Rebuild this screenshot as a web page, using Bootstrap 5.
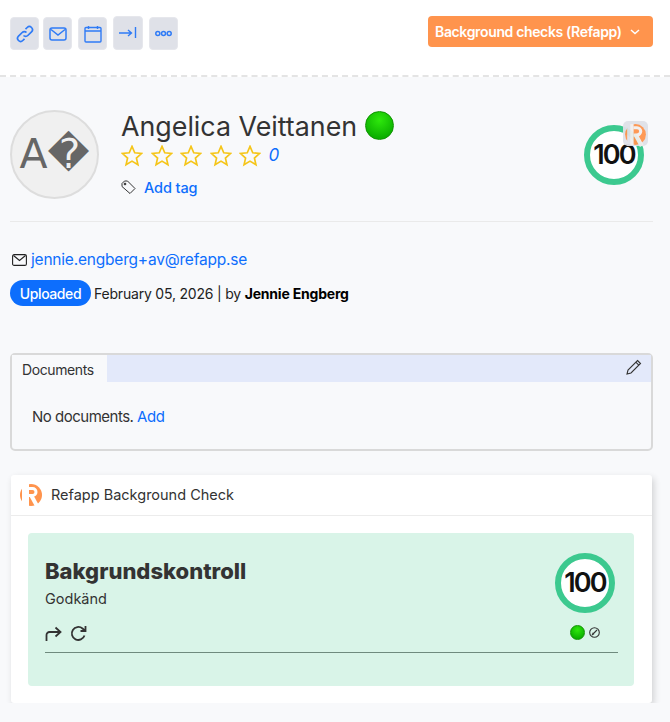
<!DOCTYPE html>
<html lang="en">
<head>
    <meta charset="UTF-8">
    <meta name="viewport" content="width=device-width, initial-scale=1.0">
    <title>Candidate</title>
    <link href="https://cdn.jsdelivr.net/npm/bootstrap@5.3.0/dist/css/bootstrap.min.css" rel="stylesheet">
    <style>
        body { background: #f8f9fb; font-family: Inter, "Liberation Sans", sans-serif; color: #333; overflow: hidden; }
        a { text-decoration: none; color: #0d6efd; }

        /* Top toolbar */
        .top-bar { background: #fff; height: 77px; border-bottom: 2px dashed #e4e4e4; padding: 17px 17px 0 10px; }
        .tool-btn { width: 29px; height: 33px; background: #dfe1e8; border: 1px solid #e6e7ec; border-radius: 4px; padding: 0; display: flex; align-items: center; justify-content: center; }
        .tool-group { gap: 4px; }
        .tool-gap { margin-left: 2px; }
        .tool-wide { width: 30px; height: 34px; margin-top: -1px; }
        .check-btn { background: #ff944d; color: #fff; border: 0; border-radius: 4px; width: 225px; height: 31px; margin-top: -1px; font-size: 14px; font-weight: 600; letter-spacing: -.35px; padding: 0 0 0 7px; display: flex; align-items: center; }
        .check-btn svg { margin-left: 8px; }

        /* Profile head */
        .profile-head { padding: 33px 26px 0 10px; height: 144px; }
        .avatar-round { width: 89px; height: 89px; border-radius: 50%; background: #f0f0f0; border: 2px solid #ddd; color: #666; font-size: 41px; line-height: 1; font-family: "DejaVu Sans", sans-serif; display: flex; align-items: center; justify-content: center; }
        .person-block { margin-left: 22px; }
        .person-name { font-size: 26.8px; font-weight: 400; line-height: 33px; margin: 0; color: #333; }
        .status-dot { display: inline-block; border-radius: 50%; border: 1px solid #0e9400; background: radial-gradient(circle at 50% 30%, #2ee80c, #0cb000 75%); }
        .status-dot-lg { width: 29px; height: 29px; margin-top: -3px; }
        .status-dot-sm { width: 15px; height: 15px; }
        .star-row { height: 25px; }
        .star-row svg { margin-right: 7.5px; }
        .star-count { font-style: italic; font-size: 17px; }
        .tag-row { margin-top: 9px; font-size: 14.5px; letter-spacing: -.1px; }
        .score-wrap { position: relative; width: 60px; height: 60px; margin-top: 15px; }
        .score-ring { width: 60px; height: 60px; border-radius: 50%; background: #fff; border: 6px solid #3cc98f; color: #111; font-size: 27px; font-weight: 600; letter-spacing: -1.800px; display: flex; align-items: center; justify-content: center; }
        .score-logo { position: absolute; top: -4px; right: -4px; width: 25px; height: 25px; background: #dfe1e8; border-radius: 5px; opacity: .95; }

        .soft-rule { margin: 0 17px 0 10px; border-top: 1px solid #eaeaea; }

        .contact-row { margin: 27px 0 0 12px; font-size: 15.5px; line-height: 22px; letter-spacing: -.2px; }
        .status-row { margin: 9px 0 0 10px; font-size: 14px; color: #222; letter-spacing: -.2px; }
        .status-pill { background: #0d6efd; color: #fff; border-radius: 13px; width: 81px; height: 26px; font-size: 14px; font-weight: 500; letter-spacing: -.4px; display: flex; align-items: center; justify-content: center; margin-right: 3px; }

        /* Documents box */
        .docs-box { margin: 47px 17px 0 10px; height: 98px; border: 2px solid #d9d9d9; border-radius: 5px; }
        .docs-tabs { height: 27px; background: #e3e9fa; }
        .docs-tab { width: 95px; height: 27px; background: #f8f9fb; font-size: 14px; letter-spacing: -.4px; padding-left: 10px; line-height: 29px; }
        .docs-edit { margin-right: 9px; }
        .docs-body { padding: 24px 0 0 20px; font-size: 15px; letter-spacing: -.5px; line-height: 22px; }

        /* Background check card */
        .check-card { margin: 24px 18px 0 11px; height: 228px; background: #fff; border-radius: 3px; border: 0; box-shadow: 2px 3px 7px rgba(0,0,0,.16); }
        .check-head { height: 41px; border-bottom: 1px solid #ececec; padding-left: 8px; font-size: 14.5px; }
        .check-head svg { margin-right: 8px; }
        .check-body { padding: 17px 18px 0 17px; }
        .result-box { height: 153px; background: #d9f4e8; border-radius: 4px; padding: 20px 16px 0 17px; }
        .result-title { font-size: 22px; font-weight: 800; line-height: 36px; margin: 0; color: #333; }
        .result-sub { font-size: 14.5px; line-height: 20px; }
        .result-tools { margin-top: 16px; gap: 8px; }
        .result-line { border-top: 1px solid #6f8a7e; margin-top: 10px; }
        .result-score { margin-right: 3px; }
        .result-marks { gap: 4px; margin: 12px 15px 0 0; }
    </style>
</head>
<body>

    <!-- Toolbar -->
    <div class="top-bar d-flex justify-content-between align-items-start">
        <div class="d-flex tool-group">
            <button class="tool-btn" type="button">
                <svg width="18" height="18" viewBox="0 0 18 18" fill="none" stroke="#2f7bf6" stroke-width="1.700"><path d="M7.500 10.500a3 3 0 0 0 4.300 0l3.700-3.700a3 3 0 0 0-4.300-4.300L9.500 4.200"/><path d="M10.500 7.500a3 3 0 0 0-4.300 0l-3.700 3.700a3 3 0 0 0 4.300 4.300l1.700-1.700"/></svg>
            </button>
            <button class="tool-btn" type="button">
                <svg width="18" height="14" viewBox="0 0 18 14" fill="none" stroke="#2f7bf6" stroke-width="1.500"><rect x="1" y="1" width="16" height="12" rx="2"/><path d="M2 2.500l7 5.500 7-5.500"/></svg>
            </button>
            <button class="tool-btn tool-gap" type="button">
                <svg width="18" height="18" viewBox="0 0 18 18" fill="none" stroke="#2f7bf6" stroke-width="1.400"><rect x="1" y="2.500" width="16" height="14.500" rx="1"/><path d="M1 6h16M4.500 1v3M13.500 1v3"/></svg>
            </button>
            <button class="tool-btn tool-wide tool-gap" type="button">
                <svg width="18" height="14" viewBox="0 0 18 14" fill="none" stroke="#2f7bf6" stroke-width="1.400"><path d="M0 7h12M9 4l3.500 3L9 10M16.500 1v11"/></svg>
            </button>
            <button class="tool-btn tool-gap" type="button">
                <svg width="17" height="7" viewBox="0 0 17 7" fill="none" stroke="#2f7bf6" stroke-width="1.500"><circle cx="2.800" cy="3.500" r="2"/><circle cx="8.500" cy="3.500" r="2"/><circle cx="14.200" cy="3.500" r="2"/></svg>
            </button>
        </div>
        <button class="check-btn" type="button">Background checks (Refapp)
            <svg width="10" height="6" viewBox="0 0 10 6" fill="none" stroke="#fff" stroke-width="1.500"><path d="M1 1l4 3.500L9 1"/></svg>
        </button>
    </div>

    <!-- Profile head -->
    <div class="profile-head d-flex justify-content-between align-items-start">
        <div class="d-flex">
            <div class="avatar-round">A&#xFFFD;</div>
            <div class="person-block">
                <h1 class="person-name d-flex align-items-center gap-2">Angelica Veittanen <span class="status-dot status-dot-lg"></span></h1>
                <div class="star-row d-flex align-items-center" id="stars"></div>
                <div class="tag-row d-flex align-items-center">
                    <svg width="15" height="15" viewBox="0 0 15 15" fill="none" stroke="#333" stroke-width="1"><path d="M1 3.500L3.500 1h3l7.500 7.500-5 5L1 6.500z"/><circle cx="4" cy="4" r=".9" fill="#333"/></svg>
                    <a href="#" class="ms-2 fw-medium">Add tag</a>
                </div>
            </div>
        </div>
        <div class="score-wrap">
            <div class="score-ring">100</div>
            <div class="score-logo">
                <svg width="25" height="25" viewBox="0 0 24 22"><circle cx="12" cy="11" r="10" fill="#ff944d"/><path d="M4 0H10V22H4z" fill="#dfe1e8"/><path d="M7 1h3v20H7z" fill="#f2efee"/><path d="M10 4.500h3.500a3.500 3.500 0 0 1 0 7H10" fill="none" stroke="#f2efee" stroke-width="3"/><path d="M12 11l6 11" stroke="#f2efee" stroke-width="4"/></svg>
            </div>
        </div>
    </div>

    <div class="soft-rule"></div>

    <div class="contact-row d-flex align-items-center">
        <svg class="me-1" width="15" height="12" viewBox="0 0 15 12" fill="none" stroke="#222" stroke-width="1.100"><rect x=".6" y=".6" width="13.800" height="10.800" rx="1.500"/><path d="M1.500 1.500l6 5 6-5"/></svg>
        <a href="#">jennie.engberg+av@refapp.se</a>
    </div>

    <div class="status-row d-flex align-items-center">
        <span class="status-pill">Uploaded</span>
        <span>February 05, 2026 | by <b class="fw-bold text-black">Jennie Engberg</b></span>
    </div>

    <!-- Documents -->
    <div class="docs-box">
        <div class="docs-tabs d-flex justify-content-between">
            <div class="docs-tab">Documents</div>
            <svg class="docs-edit mt-1" width="16" height="16" viewBox="0 0 16 16" fill="none" stroke="#333" stroke-width="1.100"><path d="M11.500 1.500l3 3L5 14l-4 1 1-4zM9.800 3.200l3 3"/></svg>
        </div>
        <div class="docs-body">No documents. <a href="#">Add</a></div>
    </div>

    <!-- Refapp check -->
    <div class="check-card">
        <div class="check-head d-flex align-items-center">
            <svg width="24" height="22" viewBox="0 0 24 22"><circle cx="12" cy="11" r="11" fill="#ff944d"/><path d="M3 0H10V22H3z" fill="#fff"/><path d="M0 0h3v3H0zM0 19h3v3H0z" fill="#fff"/><path d="M10 4.500h3.500a3.500 3.500 0 0 1 0 7H10" fill="none" stroke="#fff" stroke-width="3"/><path d="M12 11l6 11" stroke="#fff" stroke-width="4"/></svg>
            <span>Refapp Background Check</span>
        </div>
        <div class="check-body">
            <div class="result-box">
                <div class="d-flex justify-content-between">
                    <div>
                        <h2 class="result-title">Bakgrundskontroll</h2>
                        <div class="result-sub">Godkänd</div>
                        <div class="result-tools d-flex align-items-center">
                            <svg width="17" height="16" viewBox="0 0 17 16" fill="none" stroke="#333" stroke-width="1.800"><path d="M1.500 15V9a3 3 0 0 1 3-3H15M10.500 1.500L15.500 6l-5 4.500"/></svg>
                            <svg width="17" height="17" viewBox="0 0 17 17" fill="none" stroke="#333" stroke-width="1.800"><path d="M14.500 10.500A6.500 6.500 0 1 1 12.500 3.500L15.500 6M15.500 1v5h-5"/></svg>
                        </div>
                    </div>
                    <div class="d-flex flex-column align-items-end result-score">
                        <div class="score-ring">100</div>
                        <div class="d-flex align-items-center result-marks">
                            <span class="status-dot status-dot-sm"></span>
                            <svg width="11" height="11" viewBox="0 0 11 11" fill="none" stroke="#333" stroke-width="1.100"><circle cx="5.500" cy="5.500" r="4.800"/><path d="M3 8l5-5M3.500 5.800l1.500 1.500"/></svg>
                        </div>
                    </div>
                </div>
                <div class="result-line"></div>
            </div>
        </div>
    </div>

    <script>
        // five empty stars + count
        const starPath = "M12 1.500l3 7 7.500.7-5.700 5 1.700 7.300L12 17.600 5.500 21.500l1.700-7.300-5.700-5 7.500-.7z";
        let stars = "";
        for (let i = 0; i < 5; i++) {
            stars += `<svg width="22" height="22" viewBox="0 0 24 24" fill="none" stroke="#f5c518" stroke-width="1.800"><path d="${starPath}"/></svg>`;
        }
        document.getElementById("stars").innerHTML = stars + '<a href="#" class="star-count">0</a>';
    </script>

    <script src="https://cdn.jsdelivr.net/npm/bootstrap@5.3.0/dist/js/bootstrap.bundle.min.js"></script>
</body>
</html>
